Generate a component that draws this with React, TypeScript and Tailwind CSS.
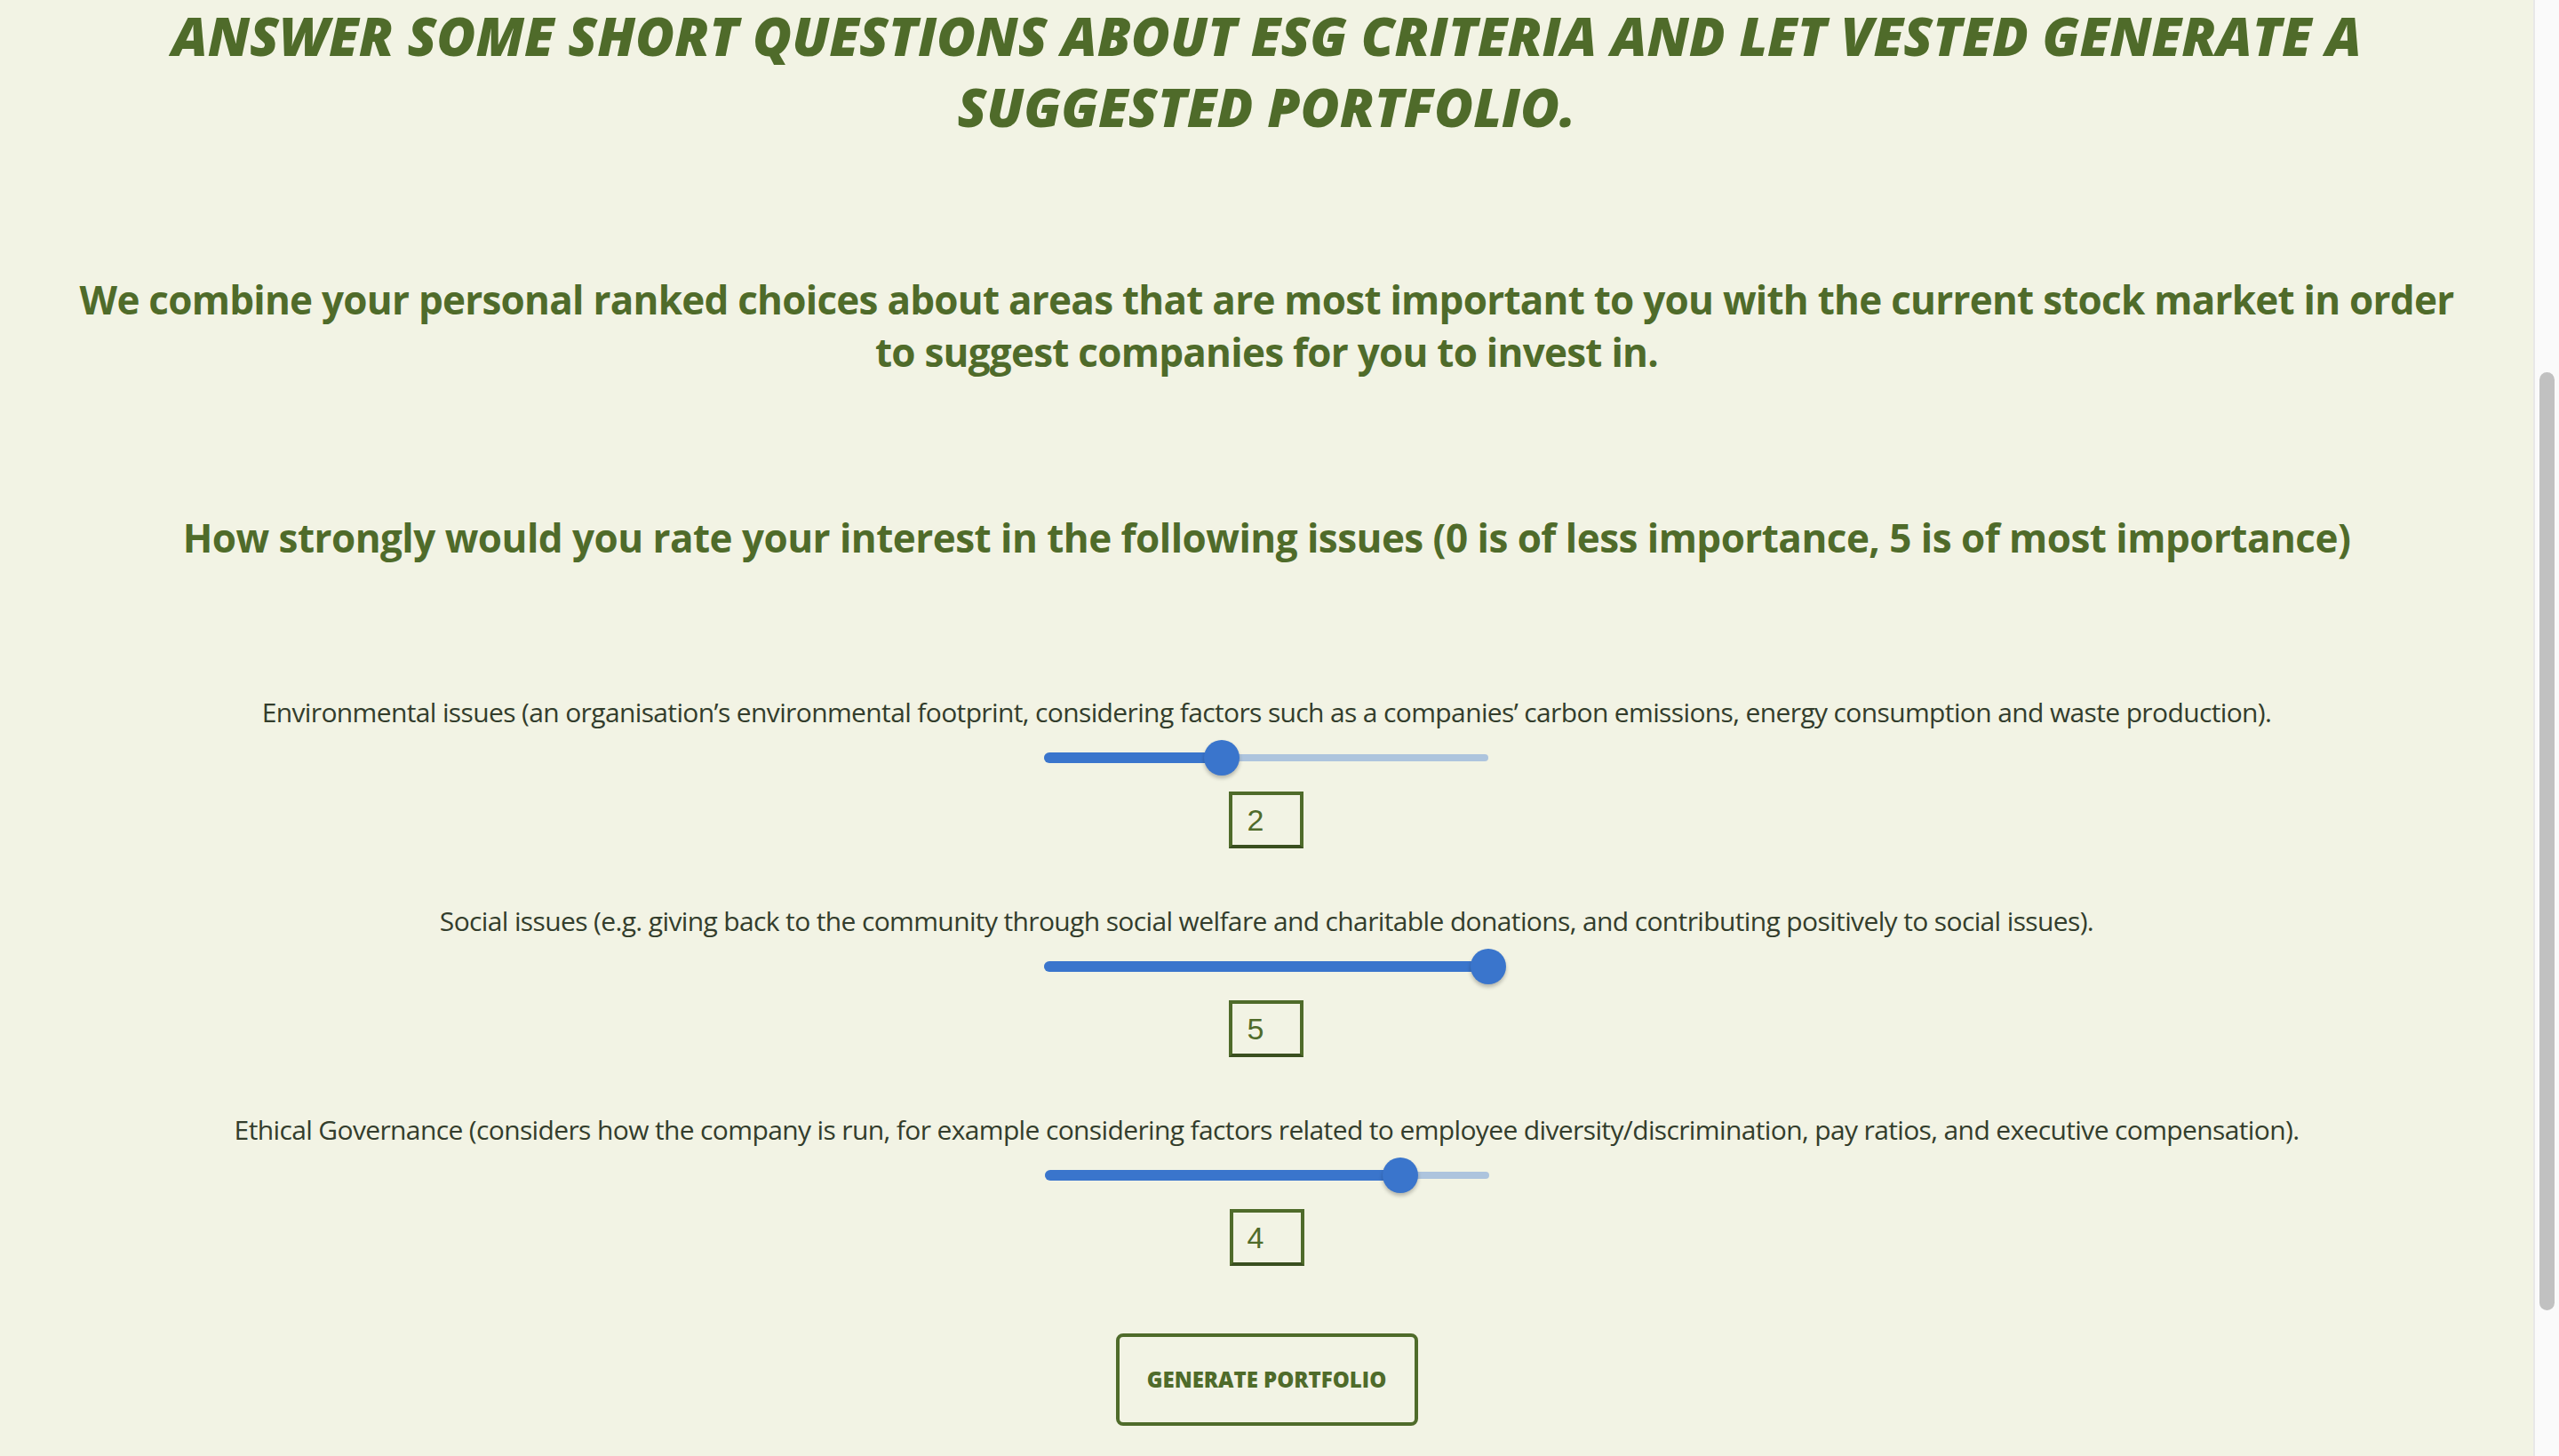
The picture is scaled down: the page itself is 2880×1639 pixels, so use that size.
import React from 'react';

const questions = [
  {
    label:
      'Environmental issues (an organisation\u2019s environmental footprint, considering factors such as a companies\u2019 carbon emissions, energy consumption and waste production).',
    value: 2,
  },
  {
    label:
      'Social issues (e.g. giving back to the community through social welfare and charitable donations, and contributing positively to social issues).',
    value: 5,
  },
  {
    label:
      'Ethical Governance (considers how the company is run, for example considering factors related to employee diversity/discrimination, pay ratios, and executive compensation).',
    value: 4,
  },
];

const Slider: React.FC<{ value: number }> = ({ value }) => {
  const pct = (value / 5) * 100;
  return (
    <div className="relative h-[40px] w-[500px]">
      <div className="absolute left-0 right-0 top-[16px] h-[8px] rounded-full bg-[#adc4dd]" />
      <div
        className="absolute left-0 top-[14px] h-[12px] rounded-full bg-[#3a75cc]"
        style={{ width: `${pct}%` }}
      />
      <div
        className="absolute top-[0px] h-[40px] w-[40px] -translate-x-1/2 rounded-full bg-[#3a75cc] shadow-[0_3px_4px_rgba(0,0,0,0.25)]"
        style={{ left: `${pct}%` }}
      />
    </div>
  );
};

const App: React.FC = () => {
  return (
    <div className="flex h-[1639px] w-full overflow-hidden bg-[#f2f3e4]">
      <main className="flex flex-1 flex-col items-center font-['Open_Sans',sans-serif] text-[#4f6b2a]">
        <h1 className="mt-0 text-center text-[60px] font-extrabold italic leading-[80px]">
          ANSWER SOME SHORT QUESTIONS ABOUT ESG CRITERIA AND LET VESTED GENERATE A
          <br />
          SUGGESTED PORTFOLIO.
        </h1>

        <p className="mt-[148px] text-center text-[44px] font-bold leading-[59px] tracking-[-0.017em]">
          We combine your personal ranked choices about areas that are most important to you with the current stock market in order
          <br />
          to suggest companies for you to invest in.
        </p>

        <h2 className="mt-[150px] text-center text-[44px] font-bold leading-[59px] tracking-[-0.012em]">
          How strongly would you rate your interest in the following issues (0 is of less importance, 5 is of most importance)
        </h2>

        <div className="mt-[147px] flex flex-col items-center gap-[62px]">
          {questions.map((q) => (
            <div key={q.value} className="flex flex-col items-center">
              <p className="text-center text-[30px] leading-[40px] tracking-[-0.021em] text-[#333d2c]">{q.label}</p>
              <div className="mt-[11px]">
                <Slider value={q.value} />
              </div>
              <div className="mt-[18px] flex h-[64px] w-[84px] items-center border-[4px] border-[#4f6b2a] border-b-[#3a4f1f] pl-[16px] font-['Liberation_Sans',Arial,sans-serif] text-[34px] text-[#4f6b2a]">
                {q.value}
              </div>
            </div>
          ))}
        </div>

        <button className="mt-[76px] flex h-[104px] w-[340px] items-center justify-center rounded-[8px] border-[4px] border-[#4f6b2a] text-[24px] font-extrabold text-[#4f6b2a]">
          GENERATE PORTFOLIO
        </button>
      </main>

      <div className="flex w-[29px] shrink-0 justify-center border-l-[2px] border-[#e8e8e8] bg-[#fafafa]">
        <div className="mt-[419px] h-[1056px] w-[17px] rounded-full bg-[#c1c1c1]" />
      </div>
    </div>
  );
};

export default App;
